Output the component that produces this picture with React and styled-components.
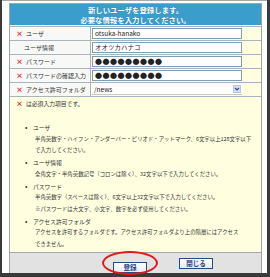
import styled, { createGlobalStyle } from 'styled-components'

const GlobalStyle = createGlobalStyle`
  html, body {
    margin: 0;
    padding: 0;
    background: #3a3a3a;
  }
  body {
    width: 270px;
    height: 277px;
    overflow: hidden;
    font-family: "Noto Sans CJK JP", "DejaVu Sans", sans-serif;
  }
`

const rows = [
    { label: 'ユーザ', required: true, value: 'otsuka-hanako' },
    { label: 'ユーザ情報', required: false, value: 'オオツカハナコ' },
    { label: 'パスワード', required: true, value: '●●●●●●●●●', secret: true },
    { label: 'パスワードの確認入力', required: true, value: '●●●●●●●●●', secret: true },
    { label: 'アクセス許可フォルダ', required: true, value: '/news', select: true },
]

const notes = [
    { title: 'ユーザ', lines: ['半角英数字・ハイフン・アンダーバー・ピリオド・アットマーク、6文字以上128文字以下', 'で入力してください。'] },
    { title: 'ユーザ情報', lines: ['全角文字・半角英数記号（コロンは除く）、32文字以下で入力してください。'] },
    { title: 'パスワード', lines: ['半角英数字（スペースは除く）、6文字以上32文字以下で入力してください。', '※パスワードは大文字、小文字、数字を必ず使用してください。'] },
    { title: 'アクセス許可フォルダ', lines: ['アクセスを許可するフォルダです。アクセス許可フォルダより上の階層にはアクセス', 'できません。'] },
]

export default function App() {
    return (
        <>
            <GlobalStyle />
            <Window>
                <Panel>
                    <Header>
                        <div>新しいユーザを登録します。</div>
                        <div>必要な情報を入力してください。</div>
                    </Header>
                    {rows.map((row) => (
                        <Row key={row.label}>
                            <Label $indent={!row.required}>
                                {row.required && <Mark>×</Mark>}
                                {row.label}
                            </Label>
                            <Cell>
                                {row.select ? (
                                    <Select>
                                        {row.value}
                                        <SelectArrow>
                                            <svg width="6" height="4" viewBox="0 0 6 4">
                                                <path d="M1 1l2 2 2-2" fill="none" stroke="#2b4a8a" strokeWidth="1.2" />
                                            </svg>
                                        </SelectArrow>
                                    </Select>
                                ) : (
                                    <Field $secret={row.secret}>{row.value}</Field>
                                )}
                            </Cell>
                        </Row>
                    ))}
                    <Notes>
                        <Required>
                            <Mark>×</Mark>は必須入力項目です。
                        </Required>
                        {notes.map((note) => (
                            <div key={note.title}>
                                <NoteTitle>{note.title}</NoteTitle>
                                {note.lines.map((line) => (
                                    <NoteLine key={line}>{line}</NoteLine>
                                ))}
                            </div>
                        ))}
                    </Notes>
                    <Footer>
                        <Circled>
                            <Button>登録</Button>
                        </Circled>
                        <Button>閉じる</Button>
                    </Footer>
                </Panel>
            </Window>
        </>
    )
}

const Window = styled.div`
    box-sizing: border-box;
    margin-left: 2px;
    width: 265px;
    height: 273px;
    padding: 2px 5px 0 7px;
    border-top: 1px solid #a8a8a8;
    background: #fff;
`

const Panel = styled.div`
    box-sizing: border-box;
    display: flex;
    flex-direction: column;
    width: 253px;
    height: 270px;
    border: 1px solid #9aa5ae;
    border-bottom: none;
`

const Header = styled.div`
    box-sizing: border-box;
    display: flex;
    flex-direction: column;
    align-items: center;
    justify-content: center;
    height: 21px;
    margin-bottom: 1px;
    background: #3a9dcc;
    color: #fff;
    font-size: 7.4px;
    font-weight: bold;
    line-height: 9.5px;
    text-shadow: 0 0 1px #1f6f99;
`

const Row = styled.div`
    box-sizing: border-box;
    display: grid;
    grid-template-columns: 81px 1fr;
    height: 14px;
    border-top: 1px solid #a9b4bd;
`

const Label = styled.div`
    display: flex;
    align-items: center;
    padding-left: ${(p) => (p.$indent ? '14px' : '6px')};
    background: #f8f8f6;
    border-right: 1px solid #a9b4bd;
    color: #333;
    font-size: 6px;
    white-space: nowrap;
`

const Mark = styled.span`
    color: #d41818;
    font-size: 7px;
    font-weight: bold;
    margin-right: 3px;
    line-height: 1;
`

const Cell = styled.div`
    display: flex;
    align-items: center;
    padding-left: 1px;
    background: #ffffe0;
`

const Field = styled.div`
    box-sizing: border-box;
    width: 150px;
    height: 11px;
    padding-left: 2px;
    border: 1px solid #7f9db9;
    background: #fff;
    color: #222;
    font-size: ${(p) => (p.$secret ? '7px' : '6.5px')};
    letter-spacing: ${(p) => (p.$secret ? '0.5px' : '0')};
    line-height: 9px;
    white-space: nowrap;
    overflow: hidden;
`

const Select = styled.div`
    box-sizing: border-box;
    display: flex;
    align-items: center;
    justify-content: space-between;
    width: 150px;
    height: 11px;
    padding: 0 1px 0 2px;
    border-bottom: 1px solid #c8c8c8;
    background: #fff;
    color: #222;
    font-size: 6.5px;
`

const SelectArrow = styled.span`
    box-sizing: border-box;
    display: flex;
    align-items: center;
    justify-content: center;
    width: 8px;
    height: 8px;
    background: #d4e0f4;
    border: 1px solid #b4c6e4;
`

const Notes = styled.div`
    box-sizing: border-box;
    flex: 1;
    padding: 1px 0 0 6px;
    border-top: 1px solid #a9b4bd;
    background: #ffffe0;
    color: #333;
    font-size: 5.4px;
    line-height: 11.7px;
`

const Required = styled.div`
    display: flex;
    align-items: center;
    height: 11px;
    margin-bottom: 13px;
    font-size: 5.8px;
`

const NoteTitle = styled.div`
    display: flex;
    align-items: center;
    padding-left: 9px;
    font-size: 5.8px;
    white-space: nowrap;

    &::before {
        content: '•';
        width: 8px;
        font-size: 7px;
    }
`

const NoteLine = styled.div`
    padding-left: 19px;
    white-space: nowrap;
`

const Footer = styled.div`
    box-sizing: border-box;
    display: flex;
    align-items: center;
    gap: 32px;
    height: 21px;
    padding-left: 103px;
    border-top: 1px solid #a0a8b0;
    background: #e2e2e2;
`

const Circled = styled.div`
    position: relative;

    &::after {
        content: '';
        position: absolute;
        left: 50%;
        top: 50%;
        width: 52px;
        height: 20px;
        transform: translate(-50%, -50%);
        border: 2px solid #e21a1a;
        border-radius: 50%;
    }
`

const Button = styled.button`
    box-sizing: border-box;
    width: 34px;
    height: 11px;
    padding: 0;
    border: 1px solid #2b4a7c;
    background: linear-gradient(#ffffff, #e4e9f2);
    color: #1f3f86;
    font-family: inherit;
    font-size: 6.5px;
    font-weight: bold;
    line-height: 9px;
`
